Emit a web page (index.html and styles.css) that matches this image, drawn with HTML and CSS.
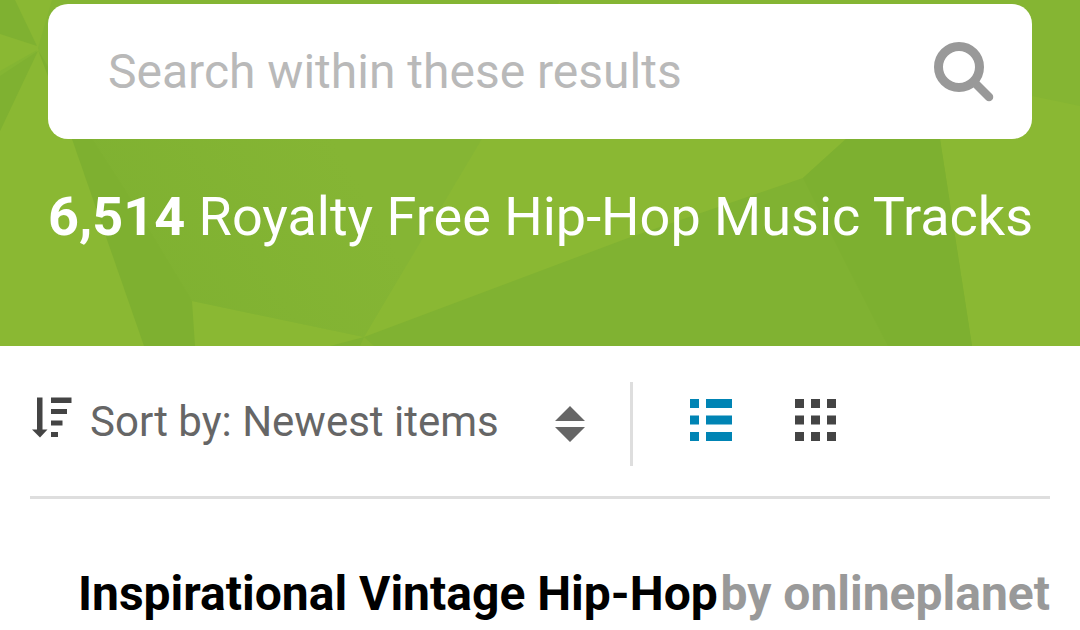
FILE: index.html
```html
<!DOCTYPE html>
<html lang="en">
<head>
<meta charset="utf-8">
<meta name="viewport" content="width=device-width, initial-scale=1">
<title>Royalty Free Hip-Hop Music Tracks</title>
<link rel="stylesheet" href="styles.css">
</head>
<body>
<header class="hero">
  <svg class="hero-art" viewBox="0 0 1080 346" preserveAspectRatio="none" aria-hidden="true">
    <defs>
      <linearGradient id="facet" gradientUnits="userSpaceOnUse" x1="130" y1="270" x2="340" y2="150">
        <stop offset="0" stop-color="#7fb131"/>
        <stop offset="1" stop-color="#85b534"/>
      </linearGradient>
    </defs>
    <path fill="#8ab833" d="M0 0H1080V346H0z"/>
    <path fill="#7fb131" d="M0 0H15L37 46L0 34z"/>
    <path fill="#84b533" d="M0 71L37 50L0 131z"/>
    <path fill="#7fb131" d="M0 76L38 51L0 131z"/>
    <path fill="#84b533" d="M52 0H560L364 337L192 301L72 139L38 48z"/>
    <path fill="url(#facet)" d="M72 139H482L364 337L192 301z"/>
    <path fill="#7eb030" d="M38 50L72 139L144 346H195L192 301L125 190L92 139z"/>
    <path fill="#80b232" d="M364 337L628 238L803 178L846 139H940L972 346H330z"/>
    <path fill="#7db030" d="M803 178L846 139H940L972 346H888L840 252z"/>
    <path fill="#85b533" d="M560 0H1080V106L1032 96H560z"/>
    <path fill="#86b533" d="M364 337L360 346H374z"/>
  </svg>
  <form class="search" role="search">
    <input class="search-input" type="search" placeholder="Search within these results" aria-label="Search within these results">
    <button class="search-button" type="button" aria-label="Search">
      <svg width="60" height="60" viewBox="0 0 60 60" fill="none" stroke="#999" aria-hidden="true">
        <circle cx="25" cy="25" r="20.5" stroke-width="9"/>
        <path d="M40 40L55 55" stroke-width="8.500" stroke-linecap="round"/>
      </svg>
    </button>
  </form>
  <h1 class="heading"><strong>6,514</strong> Royalty Free Hip-Hop Music Tracks</h1>
</header>
<main class="content">
  <div class="toolbar">
    <div class="sort">
      <svg class="sort-icon" width="40" height="42" viewBox="0 0 40 42" fill="#444" aria-hidden="true">
        <path d="M5 0.500h5.500v32H15.500L8 40.500L0 32.500h5zM19 0.500h20.500v5.500H19zM19 12h16v5H19zM19 23.500h11.500v5H19zM19 35h7v5h-7z"/>
      </svg>
      <select class="sort-select" aria-label="Sort order">
        <option>Sort by: Newest items</option>
      </select>
      <svg width="30" height="36" viewBox="0 0 30 36" fill="#666" aria-hidden="true">
        <path d="M15 0L30 15H0zM0 21H30L15 36z"/>
      </svg>
    </div>
    <div class="views">
      <button class="view view-active" type="button" aria-label="List view" aria-pressed="true">
        <svg width="42" height="42" viewBox="0 0 42 42" fill="currentColor" aria-hidden="true">
          <path d="M0 0h9v9H0zM16 0h26v9H16zM0 16.500h9v9H0zM16 16.500h26v9H16zM0 33h9v9H0zM16 33h26v9H16z"/>
        </svg>
      </button>
      <button class="view" type="button" aria-label="Grid view" aria-pressed="false">
        <svg width="42" height="42" viewBox="0 0 42 42" fill="currentColor" aria-hidden="true">
          <path d="M0 0h9v9H0zM16 0h9v9h-9zM32 0h9v9h-9zM0 16.500h9v9H0zM16 16.500h9v9h-9zM32 16.500h9v9h-9zM0 33h9v9H0zM16 33h9v9h-9zM32 33h9v9h-9z"/>
        </svg>
      </button>
    </div>
  </div>
  <article class="track">
    <h2 class="track-title">Inspirational Vintage Hip-Hop</h2>
    <span class="track-author">by onlineplanet</span>
  </article>
</main>
</body>
</html>
```
FILE: styles.css
```css
* {
  box-sizing: border-box;
}

body {
  margin: 0;
  background: #fff;
  color: #000;
  font-family: Roboto, "Liberation Sans", sans-serif;
}

.hero {
  position: relative;
  padding: 4px 48px 97px;
  background: #8ab833;
}

.hero-art {
  position: absolute;
  inset: 0;
  width: 100%;
  height: 100%;
}

.search {
  position: relative;
  display: flex;
  align-items: center;
  padding: 0 38px 0 60px;
  border-radius: 20px;
  background: #fff;
}

.search-input {
  flex: 1;
  min-width: 0;
  padding: 40px 0 39px;
  border: 0;
  outline: 0;
  background: transparent;
  color: #444;
  font: 48px/56px Roboto, "Liberation Sans", sans-serif;
  appearance: none;
}

.search-input::placeholder {
  color: #b9b9b9;
  opacity: 1;
}

.search-button,
.view {
  display: flex;
  padding: 0;
  border: 0;
  background: transparent;
  cursor: pointer;
}

.heading {
  position: relative;
  margin: 46px 0 0;
  color: #fff;
  font-size: 54px;
  font-weight: 400;
  line-height: 64px;
  white-space: nowrap;
}

.heading strong {
  font-weight: 700;
}

.content {
  padding: 0 30px;
}

.toolbar {
  display: flex;
  padding: 36px 0 30px;
  border-bottom: 3px solid #dedede;
}

.sort {
  display: flex;
  align-items: center;
  padding: 0 45px 0 2px;
  border-right: 3px solid #dedede;
}

.sort-icon {
  margin-bottom: 12px;
}

.sort-select {
  width: 483px;
  padding: 0 0 4px 18px;
  border: 0;
  background: transparent;
  color: #666;
  font: 42px/50px Roboto, "Liberation Sans", sans-serif;
  appearance: none;
}

.views {
  display: flex;
  align-items: center;
  gap: 63px;
  height: 84px;
  padding: 0 0 8px 57px;
}

.view {
  color: #444;
}

.view-active {
  color: #0084b4;
}

.track {
  display: flex;
  justify-content: space-between;
  padding: 67px 0 8px 48px;
  font-size: 48px;
  font-weight: 700;
  line-height: 56px;
  white-space: nowrap;
}

.track-title {
  margin: 0;
  font: inherit;
}

.track-author {
  color: #999;
}
```
